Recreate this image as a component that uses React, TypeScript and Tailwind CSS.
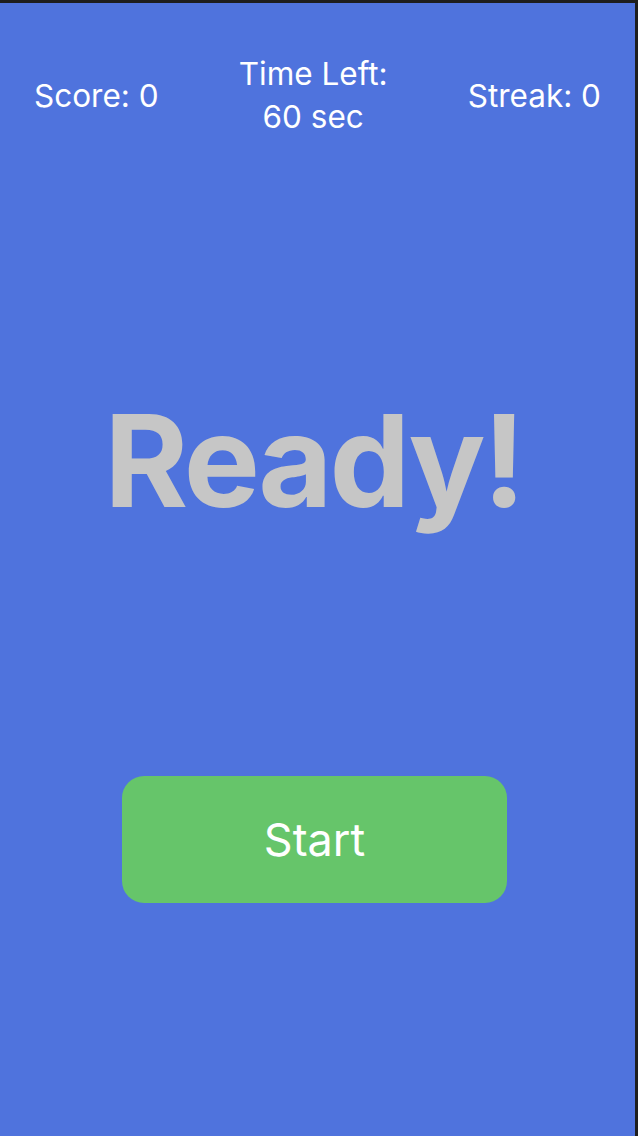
import React from "react";

export default function App() {
  return (
    <div className="w-full h-[1136px] bg-[#1e1e1e] pt-[3px] pr-[3px] overflow-hidden">
      <div
        className="w-full h-full bg-[#4f73dd] flex flex-col text-white"
        style={{ fontFamily: "Inter, 'Noto Sans', sans-serif" }}
      >
        <div className="flex items-center justify-between px-[34px] pt-[49px]">
          <div className="text-[31.5px] leading-[43px]">Score: 0</div>
          <div className="text-[31.5px] leading-[43px] text-center">
            <div>Time Left:</div>
            <div>60 sec</div>
          </div>
          <div className="text-[31.5px] leading-[43px]">Streak: 0</div>
        </div>
        <div className="flex justify-center mt-[248px]">
          <div className="text-[128px] leading-[150px] font-bold text-[#c6c6c6] tracking-[-3px] mr-[8px]">
            Ready!
          </div>
        </div>
        <div className="flex justify-center mt-[240px]">
          <button className="w-[385px] h-[127px] rounded-[22px] bg-[#66c56a] text-white text-[45px] ml-[-6px]">
            Start
          </button>
        </div>
      </div>
    </div>
  );
}
